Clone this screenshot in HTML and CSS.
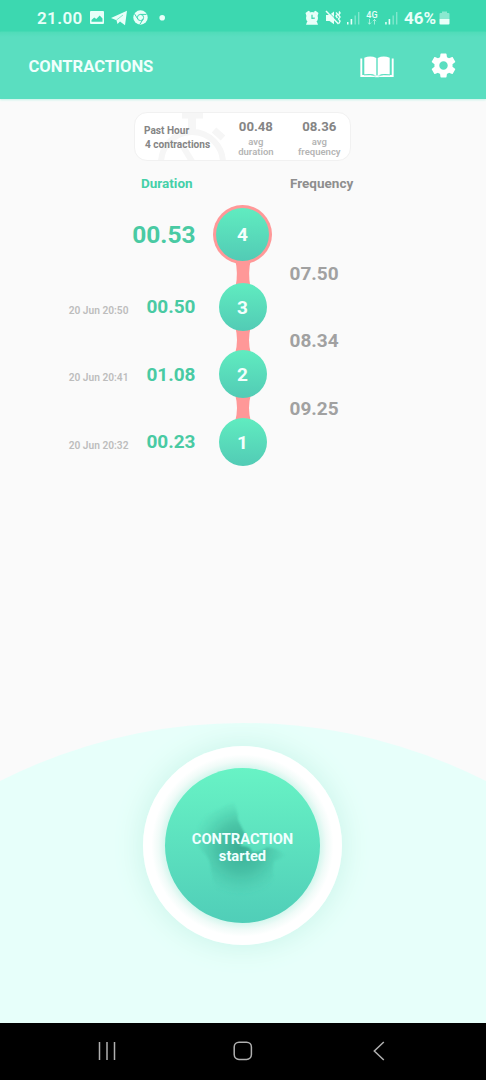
FILE: index.html
```html
<!DOCTYPE html>
<html lang="en">
<head>
<meta charset="utf-8">
<title>Contractions</title>
<link rel="stylesheet" href="styles.css">
</head>
<body>
<div class="screen">
  <header class="statusbar">
    <span class="clock">21.00</span>
    <svg class="st-left" width="80" height="16" viewBox="0 0 80 16" fill="currentColor">
      <path fill-rule="evenodd" d="M2 1h12a1 1 0 0 1 1 1v11a1 1 0 0 1-1 1H2a1 1 0 0 1-1-1V2a1 1 0 0 1 1-1zM2.500 11.700H13.500V8.600L10.700 5.500 7.300 9 5.200 7.600 2.500 10z"/>
      <path d="M22 7.900 38 .8 36 15.200 31 11.600 28.500 14 27.500 10.200z"/>
      <path d="M27.500 10 34 5" stroke="#3cd8b0" stroke-width=".6"/>
      <circle cx="51.500" cy="7.500" r="7.200"/>
      <g fill="none" stroke="#3cd8b0" stroke-width="1"><circle cx="51.500" cy="7.500" r="3.100"/><path d="M51.500 4.400h6M48.800 9 45.500 3.800M54.200 9l-3.500 5.600"/></g>
      <circle cx="73.200" cy="7.700" r="2.800"/>
    </svg>
    <svg class="st-right" width="94" height="18" viewBox="0 0 94 18" fill="currentColor">
      <path d="M1.500 7 .500 4 3.500 1.700l2 1.300zM12.500 7l1-3-3-2.300-2 1.300zM2 13l-1 2.800h12L12 13z"/>
      <circle cx="7" cy="9" r="6"/><path d="M7 5.800v3.600l2.800-.3" fill="none" stroke="#3cd8b0" stroke-width="1.200"/>
      <path d="M21 6h3.500L29 2.500v12.800L24.500 12H21z"/><path d="M22 1.500 34.500 14" stroke="#3cd8b0" stroke-width="1"/><path d="M21 2 33.500 15" stroke="currentColor" stroke-width="1.500"/>
      <path d="M31 3.500l1.500 1.500L31 7 32.500 9M34 2.500 35 4l-1.500 2L35 8l-1.500 2 1.500 2-1 2.500" fill="none" stroke="currentColor" stroke-width="1.400"/>
      <path d="M42 13h1.500v2.500H42zM45.600 10h1.600v5.500h-1.600z"/><path opacity=".4" d="M49.500 6.500h1.400v9h-1.400zM53 3h1.400v12.500H53z"/>
      <text x="61.300" y="8.600" class="net">4G</text>
      <path d="M64.500 10v5m-1.700-1.500L64.500 15.200l1.700-1.700M69.500 15.500v-5m-1.700 1.700 1.700-1.700 1.700 1.700" fill="none" stroke="currentColor" stroke-width=".9" opacity=".65"/>
      <path d="M80.200 13h1.500v2.500h-1.500zM83.600 10h1.600v5.500h-1.600z"/><path opacity=".4" d="M87.500 6.500h1.400v9h-1.400zM91 3h1.400v12.500H91z"/>
    </svg>
    <span class="battery">46%</span>
    <svg class="bat" width="11" height="16" viewBox="0 0 11 16" fill="currentColor"><path opacity=".45" d="M3 1.500h5V3h1.500q1 0 1 1v5H.500V4q0-1 1-1H3z"/><path d="M.500 9h10v4.500q0 1-1 1h-8q-1 0-1-1z"/></svg>
  </header>
  <div class="appbar">
    <h1 class="title">CONTRACTIONS</h1>
    <svg class="book" width="34" height="22" viewBox="0 0 34 22" fill="#fff">
      <path d="M4.300 1.800Q10.500-.8 16.300 2V19.500Q10.500 17.200 4.300 18.500zM29.700 1.800Q23.500-.8 17.700 2V19.500Q23.500 17.200 29.700 18.500z"/>
      <path d="M1.300 2.500v17.500H14.500q2.500 .8 5 0H32.700V2.500" fill="none" stroke="#fff" stroke-width="1.900"/>
      <path d="M4 19q7-1 11.500 1M30 19q-7-1-11.500 1" fill="none" stroke="#5adec0" stroke-width=".7"/>
    </svg>
    <svg class="gear" width="29" height="29" viewBox="0 0 24 24" fill="#fff"><path d="M19.430 12.980c.04-.32.07-.64.07-.98s-.03-.66-.07-.98l2.110-1.650c.19-.15.24-.42.12-.64l-2-3.460c-.12-.22-.39-.3-.61-.22l-2.490 1c-.52-.4-1.080-.73-1.690-.98l-.38-2.650C14.460 2.180 14.250 2 14 2h-4c-.25 0-.46.18-.49.42l-.38 2.650c-.61.25-1.170.59-1.690.98l-2.490-1c-.23-.09-.49 0-.61.22l-2 3.460c-.13.22-.07.49.12.64l2.110 1.650c-.04.32-.07.65-.07.98s.03.66.07.98l-2.110 1.650c-.19.15-.24.42-.12.64l2 3.460c.12.22.39.3.61.22l2.490-1c.52.4 1.080.73 1.690.98l.38 2.650c.03.24.24.42.49.42h4c.25 0 .46-.18.49-.42l.38-2.650c.61-.25 1.170-.59 1.690-.98l2.490 1c.23.09.49 0 .61-.22l2-3.460c.12-.22.07-.49-.12-.64l-2.110-1.650zM12 15.500c-1.930 0-3.500-1.570-3.500-3.500s1.570-3.500 3.500-3.500 3.500 1.570 3.500 3.500-1.570 3.500-3.500 3.500z"/></svg>
  </div>

  <main class="content">
    <section class="summary">
      <svg class="watermark" width="80" height="48" viewBox="0 0 80 48" fill="none" stroke="#f6f6f6"><circle cx="36" cy="50" r="31" stroke-width="6"/><path d="M36 3v16" stroke-width="8"/><path d="M37 50 26 32" stroke-width="6"/><path d="M26 2h21M58 17l9 8" stroke-width="7"/></svg>
      <div class="past"><div>Past Hour</div><div class="count">4 contractions</div></div>
      <div class="stat stat-d"><b>00.48</b><span>avg<br>duration</span></div>
      <div class="stat stat-f"><b>08.36</b><span>avg<br>frequency</span></div>
    </section>
    <div class="heads"><h2 class="head-d">Duration</h2><h2 class="head-f">Frequency</h2></div>
    <section class="timeline">
      <div class="durations">
        <div class="entry latest"><b>00.53</b></div>
        <div class="entry"><time>20 Jun 20:50</time><b>00.50</b></div>
        <div class="entry"><time>20 Jun 20:41</time><b>01.08</b></div>
        <div class="entry"><time>20 Jun 20:32</time><b>00.23</b></div>
      </div>
      <div class="nodes">
        <div class="node current">4</div>
        <svg class="link" width="18" height="28" viewBox="0 0 18 28"><path d="M1 0h16Q13.500 14 16.500 28h-15Q4.500 14 1 0z"/></svg>
        <div class="node">3</div>
        <svg class="link" width="18" height="28" viewBox="0 0 18 28"><path d="M1 0h16Q13 14 17 28H1Q5 14 1 0z"/></svg>
        <div class="node">2</div>
        <svg class="link" width="18" height="28" viewBox="0 0 18 28"><path d="M1 0h16Q13 14 17 28H1Q5 14 1 0z"/></svg>
        <div class="node">1</div>
      </div>
      <div class="freqs"><b>07.50</b><b>08.34</b><b>09.25</b></div>
    </section>
  </main>

  <section class="panel">
    <div class="ring">
      <button class="action">
        <svg class="swirl" width="155" height="155" viewBox="0 0 155 155">
          <defs>
            <radialGradient id="sh" gradientUnits="userSpaceOnUse" cx="76" cy="79" r="49"><stop offset="0" stop-color="#258c78" stop-opacity=".62"/><stop offset=".5" stop-color="#2e9c86" stop-opacity=".42"/><stop offset="1" stop-color="#42baa0" stop-opacity="0"/></radialGradient>
            <filter id="soft"><feGaussianBlur stdDeviation=".8"/></filter>
          </defs>
          <path filter="url(#soft)" fill="url(#sh)" d="M68 34Q73 42 73 52L81 68 75 78Q86 77 87 84 98 84 102 79 113 80 120 87 117 91 109 93 107 104 109 111L100 128H52L46 103Q46 91 38 84L30 74 34 50z"/>
        </svg>
        <span class="label">CONTRACTION<br>started</span>
      </button>
    </div>
  </section>

  <nav class="navbar">
    <svg width="18" height="20" viewBox="0 0 18 20"><path d="M1.500 1v18M9 1v18M16.500 1v18"/></svg>
    <svg width="20" height="20" viewBox="0 0 20 20"><rect x="1.200" y="1.200" width="17.200" height="17.200" rx="4.800"/></svg>
    <svg width="12" height="20" viewBox="0 0 12 20"><path d="M10.800 1 1.300 10l9.500 9"/></svg>
  </nav>
</div>
</body>
</html>
```

FILE: styles.css
```css
* { box-sizing: border-box; }
body { margin: 0; font-family: Roboto, "Liberation Sans", sans-serif; }
h1, h2 { margin: 0; }
svg { display: block; flex: none; }

.screen {
  width: 486px;
  height: 1080px;
  display: flex;
  flex-direction: column;
  background: #fafafa;
  overflow: hidden;
}

.statusbar {
  height: 32px;
  flex: none;
  display: flex;
  align-items: center;
  padding: 3px 0 0 37px;
  background: #3cd8b0;
  color: #e8fff9;
}
.clock { width: 52px; font-size: 17px; font-weight: 600; letter-spacing: .4px; }
.st-right { margin-left: 136px; }
.net { font-size: 9px; font-weight: 500; }
.battery { margin-left: 5px; width: 34px; font-size: 17px; font-weight: 700; white-space: nowrap; }
.bat { margin-left: 1px; }

.appbar {
  height: 67px;
  flex: none;
  display: flex;
  align-items: center;
  padding: 2px 28px 0 28.500px;
  background: linear-gradient(#50dcb9, #5adec0 5px);
  color: #fff;
  box-shadow: 0 1px 2px #c5f3e8;
}
.title { width: 331.500px; font-size: 16.600px; font-weight: 700; line-height: 20px; color: #f0fffc; }
.book { margin-top: 1px; }
.gear { margin-left: 35px; margin-top: -3px; }

.content { flex: none; height: 624px; padding-top: 13px; }

.summary {
  position: relative;
  width: 217px;
  height: 49px;
  margin-left: 134px;
  display: flex;
  background: #fff;
  border: 1px solid #f1f1f1;
  border-radius: 13px;
  overflow: hidden;
  color: #858585;
}
.watermark { position: absolute; left: 21px; top: 0; }
.past { position: relative; width: 91px; padding: 11px 0 0 9px; font-size: 10.100px; font-weight: 700; line-height: 14px; white-space: nowrap; }
.count { padding-left: 1px; }
.stat { width: 62px; text-align: center; padding-top: 5.500px; }
.stat b { display: block; font-size: 13.200px; line-height: 16px; font-weight: 700; }
.stat span { display: block; margin-top: 2px; font-size: 9.500px; line-height: 10.500px; color: #b5b5b5; font-weight: 600; }
.stat-f { margin-left: 2px; }

.heads { display: flex; height: 44px; padding: 13px 0 0 141px; }
.heads h2 { font-size: 13.500px; line-height: 18px; font-weight: 700; }
.head-d { width: 149px; color: #45d0a8; }
.head-f { color: #8e8e8e; }

.timeline { display: flex; align-items: flex-start; }
.durations { width: 195.500px; }
.entry { height: 67.500px; display: flex; align-items: center; justify-content: flex-end; }
.entry b { width: 67px; padding-top: 1px; text-align: right; font-size: 19px; font-weight: 700; line-height: 24px; color: #49caa3; }
.latest { height: 68px; padding-bottom: 9px; }
.entry.latest b { width: 80px; font-size: 24.500px; }
.entry time { font-size: 10.200px; line-height: 14px; color: #bdbdbd; padding-top: 8px; font-weight: 600; }

.nodes { width: 94px; display: flex; flex-direction: column; align-items: center; }
.node {
  position: relative;
  z-index: 1;
  width: 48px;
  height: 48px;
  border-radius: 50%;
  background: linear-gradient(#60ecc0, #52cbb5);
  color: #f4fffd;
  font-size: 19px;
  font-weight: 700;
  line-height: 49px;
  text-align: center;
}
.node.current {
  width: 59px;
  height: 59px;
  margin-bottom: -1px;
  line-height: 53px;
  background: linear-gradient(#60ecc0, #52cbb5) padding-box, #ff9898 border-box;
  border: 3px solid transparent;
}
.link { margin: -4.250px 0; fill: #ff9898; }
.freqs { padding-top: 34.500px; }
.freqs b { display: block; height: 67.500px; line-height: 67.500px; font-size: 19px; font-weight: 700; color: #a1a1a1; }

.panel {
  height: 300px;
  flex: none;
  padding: 23px 0 0 143px;
  background: #e7fffa;
  clip-path: circle(538px at 50% 538px);
}
.ring {
  width: 199px;
  height: 199px;
  padding: 22px;
  border-radius: 50%;
  background: radial-gradient(circle, #d3f6ed 0 77px, #f0fbf8 84px, #fff 91px);
  box-shadow: 0 0 26px 4px #cff6ec;
}
.action {
  position: relative;
  display: flex;
  align-items: center;
  justify-content: center;
  width: 155px;
  height: 155px;
  padding: 4px 0 0;
  border: 0;
  border-radius: 50%;
  background: linear-gradient(#68f3c5, #50ceb8);
  font-family: inherit;
  color: #efffff;
}
.swirl { position: absolute; left: 0; top: 0; }
.label { position: relative; font-size: 14.700px; line-height: 17px; font-weight: 700; }

.navbar {
  height: 57px;
  flex: none;
  display: flex;
  justify-content: space-between;
  align-items: center;
  padding: 0 101px 1px 98px;
  background: #000;
}
.navbar svg { fill: none; stroke: #b0b0b0; stroke-width: 1.500; }
.navbar svg:nth-child(2) { margin-right: 4px; }
```
